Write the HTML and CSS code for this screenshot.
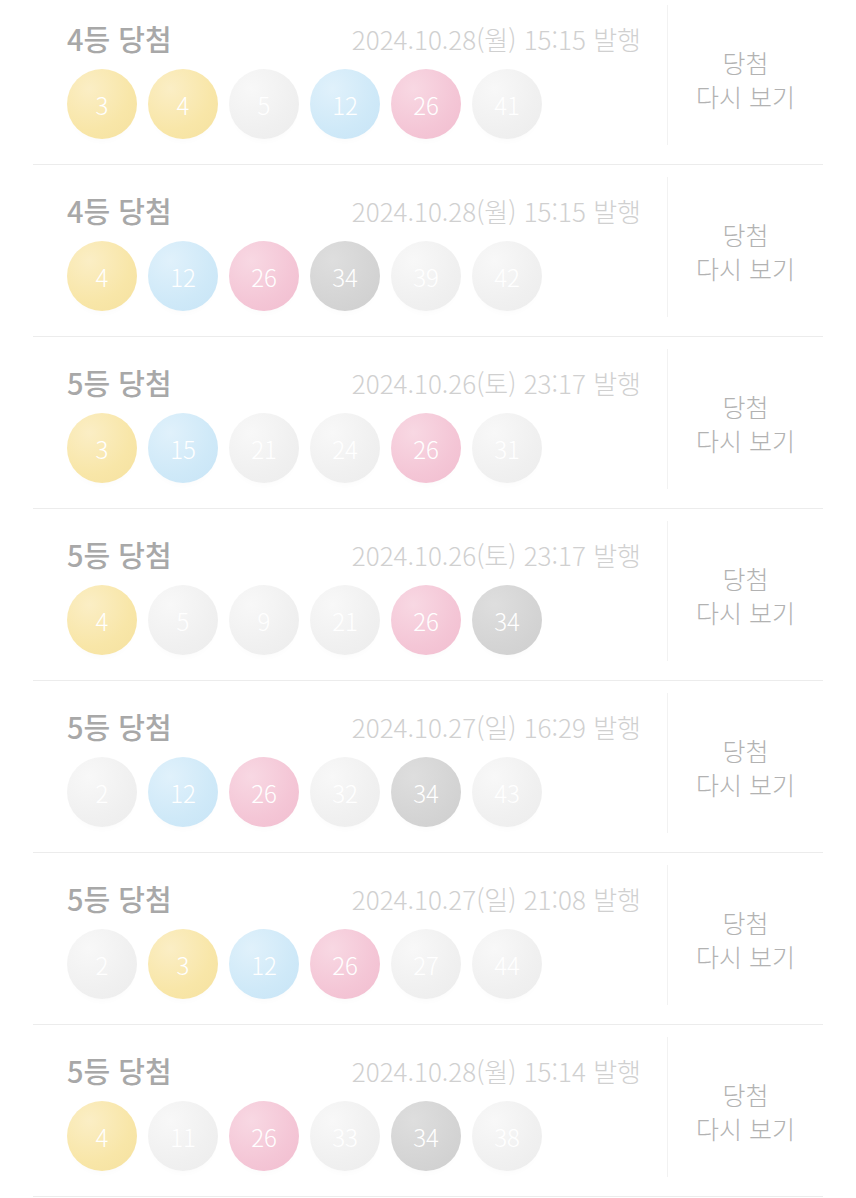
FILE: index.html
```html
<!DOCTYPE html>
<html lang="ko">
<head>
    <meta charset="UTF-8">
    <meta name="viewport" content="width=device-width, initial-scale=1.0">
    <title>당첨 내역</title>
    <link rel="stylesheet" href="styles.css">
</head>
<body>
    <div class="list">
        <div class="row">
            <div class="info">
                <div class="head">
                    <span class="rank">4등 당첨</span>
                    <span class="date">2024.10.28(월) 15:15 발행</span>
                </div>
                <div class="balls">
                    <span class="ball yellow">3</span>
                    <span class="ball yellow">4</span>
                    <span class="ball light">5</span>
                    <span class="ball blue">12</span>
                    <span class="ball pink">26</span>
                    <span class="ball light">41</span>
                </div>
            </div>
            <div class="action">당첨<br>다시 보기</div>
        </div>

        <div class="row">
            <div class="info">
                <div class="head">
                    <span class="rank">4등 당첨</span>
                    <span class="date">2024.10.28(월) 15:15 발행</span>
                </div>
                <div class="balls">
                    <span class="ball yellow">4</span>
                    <span class="ball blue">12</span>
                    <span class="ball pink">26</span>
                    <span class="ball dark">34</span>
                    <span class="ball light">39</span>
                    <span class="ball light">42</span>
                </div>
            </div>
            <div class="action">당첨<br>다시 보기</div>
        </div>

        <div class="row">
            <div class="info">
                <div class="head">
                    <span class="rank">5등 당첨</span>
                    <span class="date">2024.10.26(토) 23:17 발행</span>
                </div>
                <div class="balls">
                    <span class="ball yellow">3</span>
                    <span class="ball blue">15</span>
                    <span class="ball light">21</span>
                    <span class="ball light">24</span>
                    <span class="ball pink">26</span>
                    <span class="ball light">31</span>
                </div>
            </div>
            <div class="action">당첨<br>다시 보기</div>
        </div>

        <div class="row">
            <div class="info">
                <div class="head">
                    <span class="rank">5등 당첨</span>
                    <span class="date">2024.10.26(토) 23:17 발행</span>
                </div>
                <div class="balls">
                    <span class="ball yellow">4</span>
                    <span class="ball light">5</span>
                    <span class="ball light">9</span>
                    <span class="ball light">21</span>
                    <span class="ball pink">26</span>
                    <span class="ball dark">34</span>
                </div>
            </div>
            <div class="action">당첨<br>다시 보기</div>
        </div>

        <div class="row">
            <div class="info">
                <div class="head">
                    <span class="rank">5등 당첨</span>
                    <span class="date">2024.10.27(일) 16:29 발행</span>
                </div>
                <div class="balls">
                    <span class="ball light">2</span>
                    <span class="ball blue">12</span>
                    <span class="ball pink">26</span>
                    <span class="ball light">32</span>
                    <span class="ball dark">34</span>
                    <span class="ball light">43</span>
                </div>
            </div>
            <div class="action">당첨<br>다시 보기</div>
        </div>

        <div class="row">
            <div class="info">
                <div class="head">
                    <span class="rank">5등 당첨</span>
                    <span class="date">2024.10.27(일) 21:08 발행</span>
                </div>
                <div class="balls">
                    <span class="ball light">2</span>
                    <span class="ball yellow">3</span>
                    <span class="ball blue">12</span>
                    <span class="ball pink">26</span>
                    <span class="ball light">27</span>
                    <span class="ball light">44</span>
                </div>
            </div>
            <div class="action">당첨<br>다시 보기</div>
        </div>

        <div class="row">
            <div class="info">
                <div class="head">
                    <span class="rank">5등 당첨</span>
                    <span class="date">2024.10.28(월) 15:14 발행</span>
                </div>
                <div class="balls">
                    <span class="ball yellow">4</span>
                    <span class="ball light">11</span>
                    <span class="ball pink">26</span>
                    <span class="ball light">33</span>
                    <span class="ball dark">34</span>
                    <span class="ball light">38</span>
                </div>
            </div>
            <div class="action">당첨<br>다시 보기</div>
        </div>
    </div>
</body>
</html>
```

FILE: styles.css
```css
body {
    margin: 0;
    padding: 0;
    background: #fff;
    font-family: "Noto Sans CJK KR", "Noto Sans", sans-serif;
    overflow: hidden;
}

.list {
    margin: -7px 33px 0 33px;
}

.row {
    display: flex;
    height: 171px;
    border-bottom: 1px solid #ececec;
}

.info {
    flex: 1;
    padding: 28px 26px 0 34px;
}

.head {
    display: flex;
    justify-content: space-between;
    align-items: center;
    height: 34px;
}

.rank {
    font-size: 29px;
    font-weight: 500;
    color: #a8a8a8;
}

.date {
    font-size: 26px;
    font-weight: 300;
    color: #d0d0d0;
}

.balls {
    display: flex;
    gap: 11px;
    margin-top: 14px;
}

.ball {
    width: 70px;
    height: 70px;
    border-radius: 50%;
    display: flex;
    align-items: center;
    justify-content: center;
    color: #fff;
    font-size: 24px;
    font-weight: 300;
    box-shadow: 0 6px 8px -6px rgba(0, 0, 0, 0.03);
}

.yellow {
    background: radial-gradient(circle at 32% 28%, #fbeec5 0%, #f8e6a8 60%, #f5e19f 100%);
}

.blue {
    background: radial-gradient(circle at 32% 28%, #e0f1fb 0%, #cfe9f8 60%, #c7e4f6 100%);
}

.pink {
    background: radial-gradient(circle at 32% 28%, #f8d8e3 0%, #f4c6d6 60%, #f1bdcf 100%);
}

.light {
    background: radial-gradient(circle at 32% 28%, #f8f8f8 0%, #f0f0f0 60%, #ececec 100%);
}

.dark {
    background: radial-gradient(circle at 32% 28%, #dedede 0%, #d4d4d4 60%, #cecece 100%);
}

.action {
    width: 156px;
    height: 140px;
    margin-top: 12px;
    border-left: 1px solid #f2f2f2;
    display: flex;
    align-items: center;
    justify-content: center;
    text-align: center;
    font-size: 25px;
    font-weight: 300;
    line-height: 34px;
    color: #b2b2b2;
    padding-top: 8px;
    box-sizing: border-box;
}
```
